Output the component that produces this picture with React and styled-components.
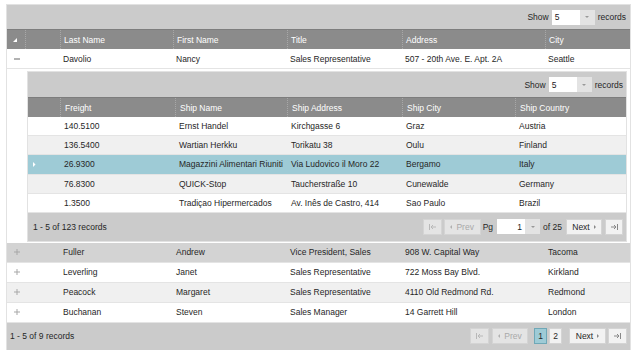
import React from "react";
import styled, { createGlobalStyle } from "styled-components";

const GlobalStyle = createGlobalStyle`
  body {
    margin: 0;
    background: #fff;
    font-family: "Liberation Sans", Arial, Helvetica, sans-serif;
  }
`;

const outerCols = "18px 35px 113px 114px 115px 143px 1fr";
const innerCols = "32px 115px 112px 115px 113px 1fr";

const rowColors = {
  white: "#ffffff",
  alt: "#f0f0f0",
  hover: "#d3d3d3",
  selected: "#9ecbd6",
};

const Grid = styled.div`
  width: ${({ w }) => w}px;
  margin: ${({ m }) => m};
  font-size: 8.5px;
  color: #262626;
  box-shadow: 0 0 0 1px #e2e2e2;
  background: #fff;
`;

const Toolbar = styled.div`
  height: ${({ h }) => h}px;
  background: #cbcbcb;
  display: flex;
  align-items: center;
  justify-content: flex-end;
  padding-right: ${({ pr }) => pr}px;
  gap: 3px;
`;

const Label = styled.span`
  color: #262626;
  white-space: nowrap;
`;

const Select = styled.div`
  display: flex;
  height: 15px;
  width: ${({ w }) => w}px;
  margin-left: ${({ ml }) => ml || 0}px;
  background: #fff;
  box-sizing: border-box;
`;

const SelectValue = styled.div`
  flex: 1;
  display: flex;
  align-items: center;
  justify-content: ${({ right }) => (right ? "flex-end" : "flex-start")};
  padding: 0 3px;
  color: #222;
`;

const SelectArrow = styled.div`
  width: 15px;
  background: #e3e3e3;
  display: flex;
  align-items: center;
  justify-content: center;
`;

const HeaderRow = styled.div`
  display: grid;
  grid-template-columns: ${({ cols }) => cols};
  height: 20px;
  background: #8b8b8b;
  border-top: 1px solid #7d7d7d;
  box-sizing: border-box;
  color: #fff;
`;

const HeaderCell = styled.div`
  display: flex;
  align-items: center;
  padding-left: ${({ pad }) => pad || 0}px;
  border-left: ${({ first }) => (first ? "none" : "1px dotted #a8a8a8")};
  white-space: nowrap;
  overflow: hidden;
`;

const Row = styled.div`
  display: grid;
  grid-template-columns: ${({ cols }) => cols};
  height: ${({ h }) => h}px;
  background: ${({ tone }) => rowColors[tone]};
  border-bottom: 1px solid #e4e4e4;
  box-sizing: border-box;
`;

const Cell = styled.div`
  display: flex;
  align-items: center;
  padding-left: ${({ pad }) => pad || 0}px;
  white-space: nowrap;
  overflow: hidden;
`;

const MarkCell = styled.div`
  display: flex;
  align-items: center;
  padding-left: ${({ pad }) => pad || 0}px;
`;

const DetailRow = styled.div`
  padding: 3px 4px 2px 21px;
  background: #fff;
`;

const Footer = styled.div`
  height: ${({ h }) => h}px;
  background: #cbcbcb;
  display: flex;
  align-items: center;
  justify-content: space-between;
  padding: 0 ${({ pr }) => pr}px 0 ${({ pl }) => pl}px;
`;

const Pager = styled.div`
  display: flex;
  align-items: center;
`;

const PagerButton = styled.div`
  height: 16px;
  width: ${({ w }) => w}px;
  margin-left: ${({ ml }) => ml || 0}px;
  box-sizing: border-box;
  display: flex;
  align-items: center;
  justify-content: center;
  gap: 4px;
  border: 1px solid ${({ active }) => (active ? "#6fa8b7" : "#d4d4d4")};
  background: ${({ active, off }) =>
    active ? "#9ecbd6" : off ? "#e4e4e4" : "#f2f2f2"};
  color: ${({ off }) => (off ? "#a9a9a9" : "#262626")};
`;

const PagerText = styled.span`
  margin-left: ${({ ml }) => ml}px;
  color: #262626;
  white-space: nowrap;
`;

const Tri = ({ dir = "right", color = "#888", size = 4 }) => {
  const pts = {
    right: `0,0 ${size},${size} 0,${size * 2}`,
    left: `${size},0 0,${size} ${size},${size * 2}`,
    down: `0,0 ${size * 2},0 ${size},${size}`,
  }[dir];
  const w = dir === "down" ? size * 2 : size;
  const h = dir === "down" ? size : size * 2;
  return (
    <svg width={w} height={h} viewBox={`0 0 ${w} ${h}`}>
      <polygon points={pts} fill={color} />
    </svg>
  );
};

const EdgeIcon = ({ dir, color }) => (
  <svg width="7" height="6" viewBox="0 0 7 6">
    {dir === "first" ? (
      <>
        <line x1="0.5" y1="0" x2="0.5" y2="6" stroke={color} strokeWidth="1" />
        <line x1="2" y1="3" x2="7" y2="3" stroke={color} strokeWidth="1" />
        <polyline points="4,1 2,3 4,5" fill="none" stroke={color} strokeWidth="1" />
      </>
    ) : (
      <>
        <line x1="6.5" y1="0" x2="6.5" y2="6" stroke={color} strokeWidth="1" />
        <line x1="0" y1="3" x2="5" y2="3" stroke={color} strokeWidth="1" />
        <polyline points="3,1 5,3 3,5" fill="none" stroke={color} strokeWidth="1" />
      </>
    )}
  </svg>
);

const SortMark = () => (
  <svg width="4" height="4" viewBox="0 0 4 4">
    <polygon points="4,0 4,4 0,4" fill="#fff" />
  </svg>
);

const Minus = () => (
  <svg width="6" height="2" viewBox="0 0 6 2">
    <rect x="0" y="0.5" width="6" height="1" fill="#666" />
  </svg>
);

const Plus = () => (
  <svg width="6" height="6" viewBox="0 0 6 6">
    <rect x="0" y="2.5" width="6" height="1" fill="#a8a8a8" />
    <rect x="2.5" y="0" width="1" height="6" fill="#a8a8a8" />
  </svg>
);

const ShowRecords = ({ pr, h }) => (
  <Toolbar h={h} pr={pr}>
    <Label>Show</Label>
    <Select w={43}>
      <SelectValue>5</SelectValue>
      <SelectArrow>
        <Tri dir="down" size={2} color="#999" />
      </SelectArrow>
    </Select>
    <Label>records</Label>
  </Toolbar>
);

const employees = [
  ["Davolio", "Nancy", "Sales Representative", "507 - 20th Ave. E. Apt. 2A", "Seattle"],
  ["Fuller", "Andrew", "Vice President, Sales", "908 W. Capital Way", "Tacoma"],
  ["Leverling", "Janet", "Sales Representative", "722 Moss Bay Blvd.", "Kirkland"],
  ["Peacock", "Margaret", "Sales Representative", "4110 Old Redmond Rd.", "Redmond"],
  ["Buchanan", "Steven", "Sales Manager", "14 Garrett Hill", "London"],
];
const empTones = ["white", "hover", "white", "alt", "white"];

const orders = [
  ["140.5100", "Ernst Handel", "Kirchgasse 6", "Graz", "Austria"],
  ["136.5400", "Wartian Herkku", "Torikatu 38", "Oulu", "Finland"],
  ["26.9300", "Magazzini Alimentari Riuniti", "Via Ludovico il Moro 22", "Bergamo", "Italy"],
  ["76.8300", "QUICK-Stop", "Taucherstraße 10", "Cunewalde", "Germany"],
  ["1.3500", "Tradiçao Hipermercados", "Av. Inês de Castro, 414", "Sao Paulo", "Brazil"],
];
const orderTones = ["white", "alt", "selected", "alt", "white"];

const EmployeeRow = ({ data, tone, open }) => (
  <Row cols={outerCols} h={20} tone={tone}>
    <MarkCell pad={7}>{open ? <Minus /> : <Plus />}</MarkCell>
    <Cell />
    {data.map((v, i) => (
      <Cell key={i} pad={3}>{v}</Cell>
    ))}
  </Row>
);

const OrdersGrid = () => (
  <Grid w={598} m="0">
    <ShowRecords h={25} pr={3} />
    <HeaderRow cols={innerCols}>
      <HeaderCell first />
      {["Freight", "Ship Name", "Ship Address", "Ship City", "Ship Country"].map((t) => (
        <HeaderCell key={t} pad={4}>{t}</HeaderCell>
      ))}
    </HeaderRow>
    {orders.map((o, i) => (
      <Row key={i} cols={innerCols} h={19.2} tone={orderTones[i]}>
        <MarkCell pad={5}>
          {orderTones[i] === "selected" && <Tri dir="right" size={2.5} color="#fff" />}
        </MarkCell>
        {o.map((v, j) => (
          <Cell key={j} pad={4}>{v}</Cell>
        ))}
      </Row>
    ))}
    <Footer h={28} pl={5} pr={3}>
      <Label>1 - 5 of 123 records</Label>
      <Pager>
        <PagerButton w={19} off>
          <EdgeIcon dir="first" color="#b8b8b8" />
        </PagerButton>
        <PagerButton w={37} ml={2} off>
          <Tri dir="left" size={2} color="#b0b0b0" />
          Prev
        </PagerButton>
        <PagerText ml={2}>Pg</PagerText>
        <Select w={43} ml={4}>
          <SelectValue right>1</SelectValue>
          <SelectArrow>
            <Tri dir="down" size={2} color="#999" />
          </SelectArrow>
        </Select>
        <PagerText ml={3}>of 25</PagerText>
        <PagerButton w={36} ml={4}>
          Next
          <Tri dir="right" size={2} color="#888" />
        </PagerButton>
        <PagerButton w={18} ml={3}>
          <EdgeIcon dir="last" color="#888" />
        </PagerButton>
      </Pager>
    </Footer>
  </Grid>
);

export default function App() {
  return (
    <>
      <GlobalStyle />
      <Grid w={623} m="5px 0 0 7px">
        <ShowRecords h={24} pr={4} />
        <HeaderRow cols={outerCols}>
          <HeaderCell first pad={6}>
            <SortMark />
          </HeaderCell>
          <HeaderCell />
          {["Last Name", "First Name", "Title", "Address", "City"].map((t) => (
            <HeaderCell key={t} pad={3}>{t}</HeaderCell>
          ))}
        </HeaderRow>
        <EmployeeRow data={employees[0]} tone={empTones[0]} open />
        <DetailRow>
          <OrdersGrid />
        </DetailRow>
        {employees.slice(1).map((e, i) => (
          <EmployeeRow key={e[0]} data={e} tone={empTones[i + 1]} />
        ))}
        <Footer h={27} pl={3} pr={3}>
          <Label>1 - 5 of 9 records</Label>
          <Pager>
            <PagerButton w={19} off>
              <EdgeIcon dir="first" color="#b8b8b8" />
            </PagerButton>
            <PagerButton w={36} ml={3} off>
              <Tri dir="left" size={2} color="#b0b0b0" />
              Prev
            </PagerButton>
            <PagerButton w={13} ml={6} active>
              1
            </PagerButton>
            <PagerButton w={13} ml={2}>
              2
            </PagerButton>
            <PagerButton w={37} ml={7}>
              Next
              <Tri dir="right" size={2} color="#888" />
            </PagerButton>
            <PagerButton w={19} ml={2}>
              <EdgeIcon dir="last" color="#888" />
            </PagerButton>
          </Pager>
        </Footer>
      </Grid>
    </>
  );
}
